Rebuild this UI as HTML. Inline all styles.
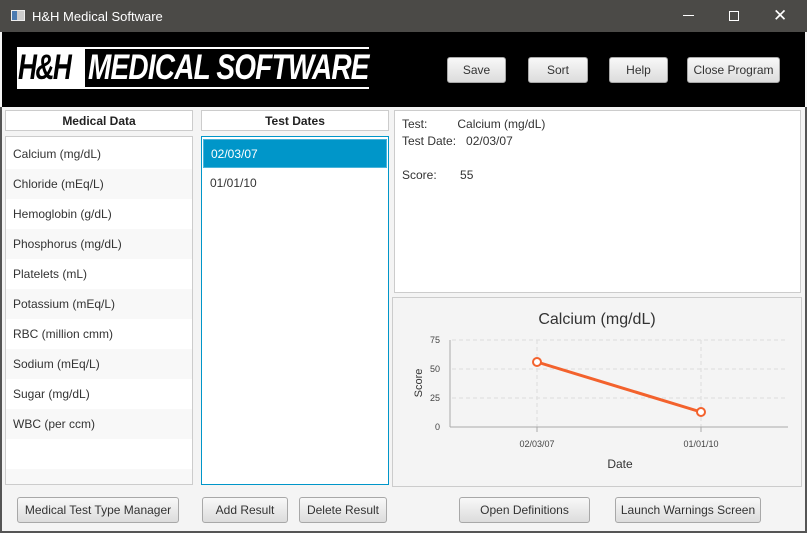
<!DOCTYPE html>
<html><head><style>
*{margin:0;padding:0;box-sizing:border-box}
body{width:807px;height:533px;overflow:hidden;background:#f4f4f4;font-family:"Liberation Sans",sans-serif;font-size:12px;color:#333;position:relative}
.a{position:absolute}
.btn{position:absolute;height:26px;border:1px solid #a8a8a8;border-radius:3px;background:linear-gradient(#f8f8f8,#dcdcdc);font-size:12px;color:#333;display:flex;align-items:center;justify-content:center}
.hdr{position:absolute;height:21px;background:#fff;border:1px solid #ccc;font-weight:bold;font-size:12px;display:flex;align-items:center;justify-content:center;color:#222}
.row{height:30px;line-height:30px;padding-left:7px;font-size:12px}
.row:nth-child(even){background:#f8f8f8}
</style></head><body>
<div class="a" style="left:0;top:0;width:807px;height:32px;background:#4b4a47"></div>
<div class="a" style="left:11px;top:10px;width:14px;height:11px;background:#ccc;border:1px solid #eee"><div style="width:5px;height:9px;background:#4a7ab0"></div></div>
<div class="a" style="left:32px;top:9px;color:#fff;font-size:13px">H&amp;H Medical Software</div>
<div class="a" style="left:683px;top:15px;width:11px;height:1px;background:#fff"></div>
<div class="a" style="left:729px;top:11px;width:10px;height:10px;border:1px solid #fff"></div>
<div class="a" style="left:773px;top:6px;color:#fff;font-size:17px">✕</div>
<div class="a" style="left:2px;top:32px;width:803px;height:75px;background:#000"></div>
<div class="a" style="left:17px;top:47px;width:352px;height:2px;background:#fff"></div>
<div class="a" style="left:17px;top:87px;width:352px;height:2px;background:#fff"></div>
<div class="a" style="left:17px;top:49px;width:68px;height:40px;background:#fff"></div>
<div class="a" style="left:18px;top:48px;font:italic bold 35px 'Liberation Sans',sans-serif;color:#000;letter-spacing:-2px;transform:scaleX(.75);transform-origin:left;line-height:40px">H&amp;H</div>
<div class="a" style="left:88px;top:48px;font:italic bold 35px 'Liberation Sans',sans-serif;color:#fff;letter-spacing:-1px;transform:scaleX(.8);transform-origin:left;white-space:nowrap;line-height:40px">MEDICAL SOFTWARE</div>
<div class="btn" style="left:447px;top:57px;width:59px">Save</div>
<div class="btn" style="left:528px;top:57px;width:60px">Sort</div>
<div class="btn" style="left:609px;top:57px;width:59px">Help</div>
<div class="btn" style="left:687px;top:57px;width:93px">Close Program</div>
<div class="a" style="left:0;top:107px;width:2px;height:426px;background:#555"></div>
<div class="a" style="left:805px;top:107px;width:2px;height:426px;background:#555"></div>
<div class="a" style="left:0;top:531px;width:807px;height:2px;background:#555"></div>
<div class="hdr" style="left:5px;top:110px;width:188px">Medical Data</div>
<div class="hdr" style="left:201px;top:110px;width:188px">Test Dates</div>
<div class="a" style="left:5px;top:136px;width:188px;height:349px;background:#fff;border:1px solid #ccc;padding-top:2px;overflow:hidden">
<div class="row" style="background:#fff">Calcium (mg/dL)</div><div class="row">Chloride (mEq/L)</div><div class="row" style="background:#fff">Hemoglobin (g/dL)</div><div class="row">Phosphorus (mg/dL)</div><div class="row" style="background:#fff">Platelets (mL)</div><div class="row">Potassium (mEq/L)</div><div class="row" style="background:#fff">RBC (million cmm)</div><div class="row">Sodium (mEq/L)</div><div class="row" style="background:#fff">Sugar (mg/dL)</div><div class="row">WBC (per ccm)</div><div class="row" style="background:#fff"></div><div class="row"></div>
</div>
<div class="a" style="left:201px;top:136px;width:188px;height:349px;background:#fff;border:1px solid #0096c9;padding:2px 1px 0;overflow:hidden">
<div class="row" style="background:#0096c9;color:#fff;height:29px;line-height:29px;border:1px solid #4ab4da">02/03/07</div><div class="row" style="background:#fff">01/01/10</div><div class="row"></div><div class="row" style="background:#fff"></div><div class="row"></div><div class="row" style="background:#fff"></div><div class="row"></div><div class="row" style="background:#fff"></div><div class="row"></div><div class="row" style="background:#fff"></div><div class="row"></div>
</div>
<div class="a" style="left:394px;top:110px;width:407px;height:183px;background:#fff;border:1px solid #ccc"></div>
<div class="a" style="left:402px;top:116px;line-height:17px;font-size:12px">Test:&nbsp;&nbsp;&nbsp;&nbsp;&nbsp;&nbsp;&nbsp;&nbsp;&nbsp;Calcium (mg/dL)<br>Test Date:&nbsp;&nbsp;&nbsp;02/03/07<br><br>Score:&nbsp;&nbsp;&nbsp;&nbsp;&nbsp;&nbsp;&nbsp;55</div>
<div class="a" style="left:392px;top:297px;width:410px;height:190px;border:1px solid #ccc;background:#f4f4f4"></div>
<svg class="a" style="left:392px;top:297px" width="410" height="190">
<text x="205" y="27" text-anchor="middle" font-family="Liberation Sans" font-size="16" fill="#333">Calcium (mg/dL)</text>
<g stroke="#ddd" stroke-dasharray="4,3"><line x1="60" y1="43" x2="396" y2="43"/><line x1="60" y1="72" x2="396" y2="72"/><line x1="60" y1="101" x2="396" y2="101"/><line x1="145" y1="43" x2="145" y2="130"/><line x1="309" y1="43" x2="309" y2="130"/></g>
<line x1="58" y1="130" x2="396" y2="130" stroke="#aaa"/><line x1="58" y1="43" x2="58" y2="130" stroke="#aaa"/>
<line x1="145" y1="130" x2="145" y2="135" stroke="#aaa"/><line x1="309" y1="130" x2="309" y2="135" stroke="#aaa"/>
<g font-family="Liberation Sans" font-size="9" fill="#444" text-anchor="end"><text x="48" y="46">75</text><text x="48" y="75">50</text><text x="48" y="104">25</text><text x="48" y="133">0</text></g>
<g font-family="Liberation Sans" font-size="9" fill="#444" text-anchor="middle"><text x="145" y="150">02/03/07</text><text x="309" y="150">01/01/10</text></g>
<text x="228" y="171" text-anchor="middle" font-family="Liberation Sans" font-size="12" fill="#333">Date</text>
<text transform="translate(30,86) rotate(-90)" text-anchor="middle" font-family="Liberation Sans" font-size="11" fill="#333">Score</text>
<line x1="145" y1="65" x2="309" y2="115" stroke="#f3622d" stroke-width="3"/>
<circle cx="145" cy="65" r="4" fill="#fff" stroke="#f3622d" stroke-width="2"/><circle cx="309" cy="115" r="4" fill="#fff" stroke="#f3622d" stroke-width="2"/>
</svg>
<div class="btn" style="left:17px;top:497px;width:162px">Medical Test Type Manager</div>
<div class="btn" style="left:202px;top:497px;width:86px">Add Result</div>
<div class="btn" style="left:299px;top:497px;width:88px">Delete Result</div>
<div class="btn" style="left:459px;top:497px;width:131px">Open Definitions</div>
<div class="btn" style="left:615px;top:497px;width:146px">Launch Warnings Screen</div>
</body></html>
